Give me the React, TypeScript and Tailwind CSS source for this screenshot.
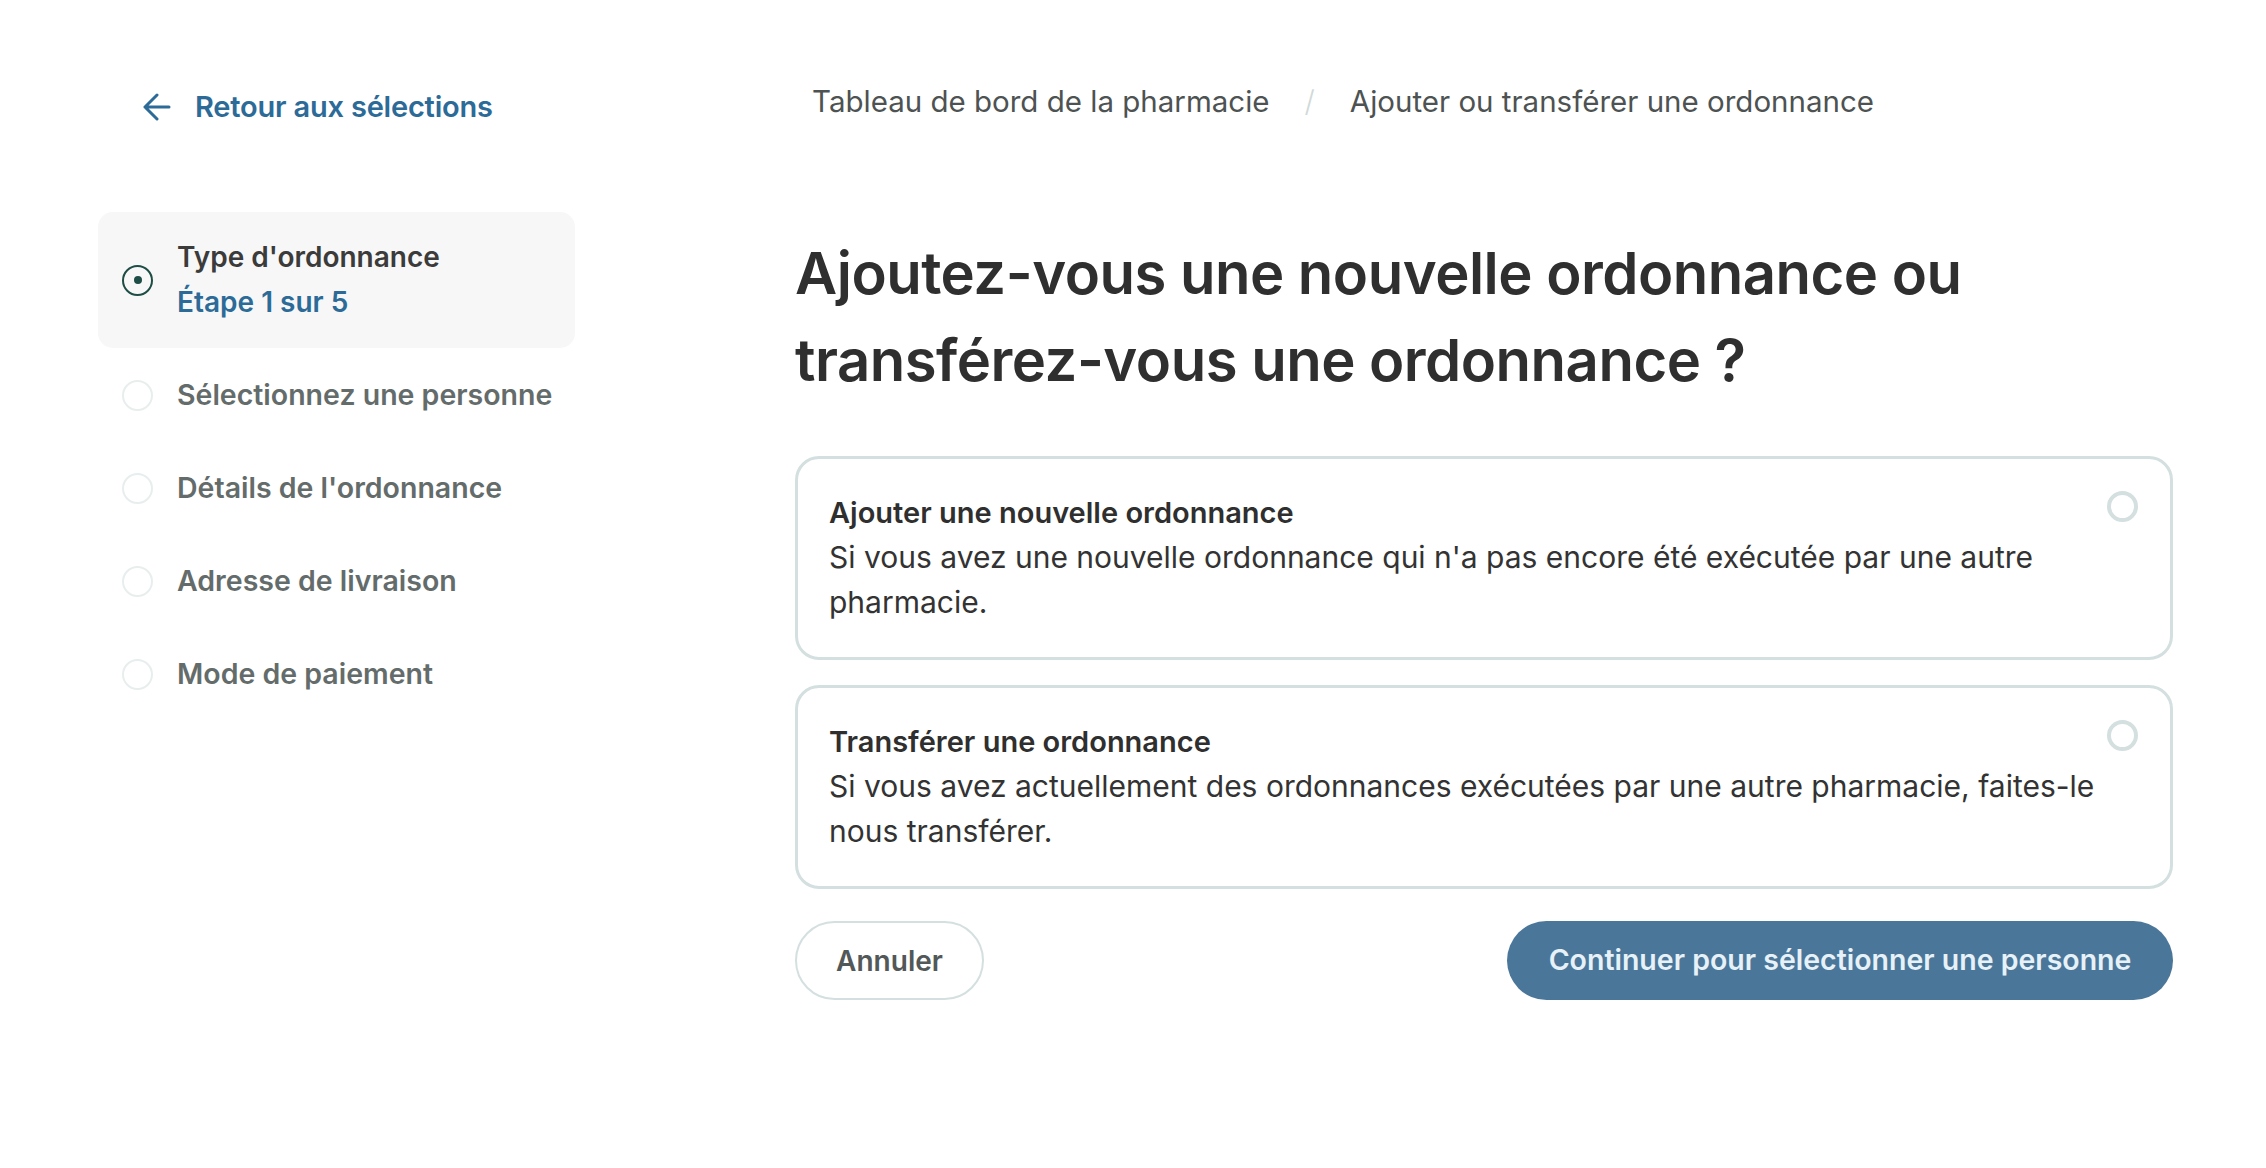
import React, { useState } from "react";

const steps = [
  "Sélectionnez une personne",
  "Détails de l'ordonnance",
  "Adresse de livraison",
  "Mode de paiement",
];

const options = [
  {
    id: "new",
    title: "Ajouter une nouvelle ordonnance",
    text: "Si vous avez une nouvelle ordonnance qui n'a pas encore été exécutée par une autre pharmacie.",
  },
  {
    id: "transfer",
    title: "Transférer une ordonnance",
    text: "Si vous avez actuellement des ordonnances exécutées par une autre pharmacie, faites-le nous transférer.",
  },
];

function ArrowLeft() {
  return (
    <svg width="28" height="28" viewBox="0 0 28 28" fill="none">
      <path
        d="M26 14H2M14 2L2 14L14 26"
        stroke="#2c6b97"
        strokeWidth="3"
        strokeLinecap="round"
        strokeLinejoin="round"
      />
    </svg>
  );
}

export default function App() {
  const [selected, setSelected] = useState<string | null>(null);

  return (
    <div className="min-h-screen bg-white font-['Inter',sans-serif] flex pl-[98px] pr-[93px] pt-[72px]">
      {/* sidebar */}
      <aside className="w-[477px] shrink-0">
        <a className="flex items-center gap-[24px] pl-[45px] h-[70px] text-[#2c6b97] text-[29px] font-semibold tracking-[-0.2px] cursor-pointer">
          <ArrowLeft />
          Retour aux sélections
        </a>

        <div className="mt-[70px] flex items-center gap-[24px] rounded-[15px] bg-[#f7f7f7] pl-[24px] py-[23px]">
          <span className="w-[31px] h-[31px] rounded-full border-[2.5px] border-[#1d4d45] flex items-center justify-center">
            <span className="w-[8px] h-[8px] rounded-full bg-[#1d4d45]" />
          </span>
          <div className="text-[28px] leading-[45px] font-semibold">
            <div className="text-[#3b3b3b]">Type d'ordonnance</div>
            <div className="text-[#2c6b97]">Étape 1 sur 5</div>
          </div>
        </div>

        <ul className="mt-[1px]">
          {steps.map((s) => (
            <li
              key={s}
              className="flex items-center gap-[24px] pl-[24px] h-[93px] text-[28.5px] font-semibold text-[#646c6b]"
            >
              <span className="w-[31px] h-[31px] rounded-full border-[2px] border-[#e8eeee]" />
              {s}
            </li>
          ))}
        </ul>
      </aside>

      {/* main */}
      <main className="ml-[220px] flex-1">
        <nav className="flex items-center h-[58px] pl-[17px] text-[29.5px] text-[#4d5252]">
          <span>Tableau de bord de la pharmacie</span>
          <span className="mx-[35px] text-[#d0d9d9] font-light">/</span>
          <span>Ajouter ou transférer une ordonnance</span>
        </nav>

        <h1 className="mt-[100px] text-[58px] leading-[87px] font-semibold text-[#2f2f2f] tracking-[-0.5px]">
          Ajoutez-vous une nouvelle ordonnance ou
          <br />
          transférez-vous une ordonnance ?
        </h1>

        <div className="mt-[52px] flex flex-col gap-[25px]">
          {options.map((o) => (
            <label
              key={o.id}
              className="relative block rounded-[24px] border-[3px] border-[#d4dfe0] bg-white pl-[31px] pr-[60px] pt-[31px] pb-[32px] cursor-pointer"
              onClick={() => setSelected(o.id)}
            >
              <span className="absolute right-[32px] top-[32px] w-[31px] h-[31px] rounded-full border-[4px] border-[#d4dfe0] flex items-center justify-center">
                {selected === o.id && (
                  <span className="w-[11px] h-[11px] rounded-full bg-[#1d4d45]" />
                )}
              </span>
              <div className="text-[29px] leading-[45px] font-semibold text-[#2f2f2f]">
                {o.title}
              </div>
              <div className="text-[30px] leading-[45px] text-[#333333]">
                {o.text}
              </div>
            </label>
          ))}
        </div>

        <div className="mt-[32px] flex items-center justify-between">
          <button className="h-[79px] w-[189px] rounded-full border-[2px] border-[#d4dfe0] text-[28px] font-semibold text-[#525858]">
            Annuler
          </button>
          <button className="h-[79px] w-[666px] rounded-full bg-[#4a7699] text-[28.5px] font-semibold text-[#e6f1f8]">
            Continuer pour sélectionner une personne
          </button>
        </div>
      </main>
    </div>
  );
}
